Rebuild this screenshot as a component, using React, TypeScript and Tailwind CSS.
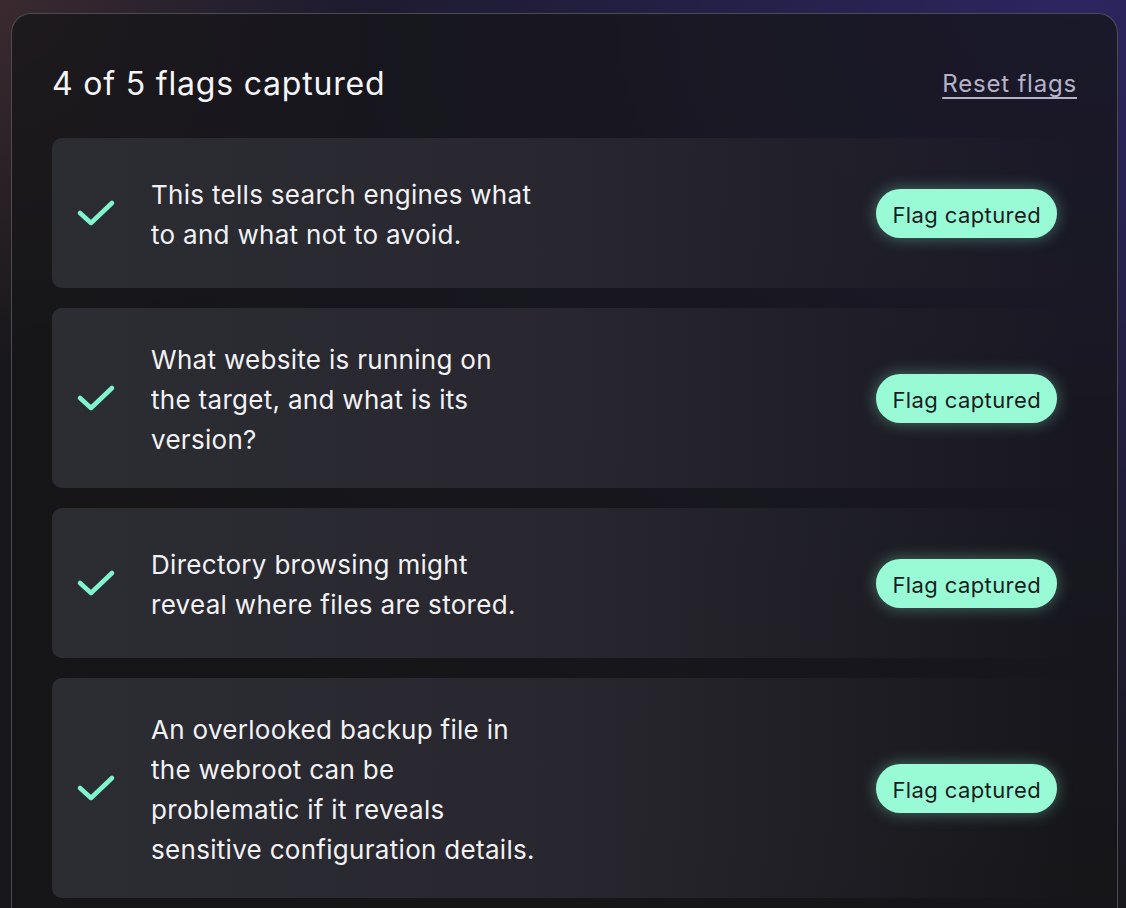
import { Fragment } from 'react'

interface Flag {
  id: number
  lines: string[]
}

// Line breaks follow the original card layout
const flags: Flag[] = [
  { id: 1, lines: ['This tells search engines what', 'to and what not to avoid.'] },
  { id: 2, lines: ['What website is running on', 'the target, and what is its', 'version?'] },
  { id: 3, lines: ['Directory browsing might', 'reveal where files are stored.'] },
  {
    id: 4,
    lines: [
      'An overlooked backup file in',
      'the webroot can be',
      'problematic if it reveals',
      'sensitive configuration details.',
    ],
  },
]

function CheckIcon() {
  return (
    <svg width="40" height="34" viewBox="0 0 40 34" fill="none" className="shrink-0">
      <polyline
        points="4,17 15,27 36,7"
        stroke="#80f5cd"
        strokeWidth="4.5"
        strokeLinecap="round"
        strokeLinejoin="round"
      />
    </svg>
  )
}

function FlagCard({ flag }: { flag: Flag }) {
  return (
    <div className="flex min-h-[150px] items-center rounded-[10px] bg-gradient-to-r from-[#2c2c33] via-[#28272f] to-transparent py-[30px] pl-[24px] pr-[20px]">
      <CheckIcon />
      <p className="ml-[35px] translate-y-[2px] text-[26px] leading-[40px] tracking-[0.3px] text-[#f2f2f4]">
        {flag.lines.map((line) => (
          <span key={line} className="block whitespace-nowrap">
            {line}
          </span>
        ))}
      </p>
      <div className="ml-auto rounded-full bg-[#98fbd6] px-[16px] pt-[11px] pb-[7px] text-[22px] leading-[31px] tracking-[0.4px] text-[#1b1b1e] shadow-[0_0_16px_rgba(140,245,205,0.4)]">
        Flag captured
      </div>
    </div>
  )
}

export default function App() {
  return (
    <div
      className="min-h-[908px] overflow-hidden bg-[#18171b] bg-[radial-gradient(ellipse_at_95%_0%,#2c2560_0%,rgba(44,37,96,0.45)_35%,transparent_70%),radial-gradient(circle_at_0%_0%,#3a2a30_0%,transparent_25%)] pl-[11px] pr-[8px] pt-[13px]"
      style={{ fontFamily: 'Inter, "Open Sans", sans-serif' }}
    >
      <div className="rounded-t-[20px] border border-b-0 border-[#4c4b52] bg-[#151518]/75 px-[40px] pb-[40px]">
        <div className="flex h-[44px] items-center justify-between mt-[48px] mb-[32px]">
          <h1 className="text-[32px] font-normal tracking-[0.8px] text-[#f5f5f7]">4 of 5 flags captured</h1>
          <a className="text-[24px] tracking-[0.8px] text-[#b6b2c8] underline underline-offset-[5px] decoration-[2px]" href="#">
            Reset flags
          </a>
        </div>
        <div className="flex flex-col gap-[20px]">
          {flags.map((flag) => (
            <Fragment key={flag.id}>
              <FlagCard flag={flag} />
            </Fragment>
          ))}
        </div>
      </div>
    </div>
  )
}
